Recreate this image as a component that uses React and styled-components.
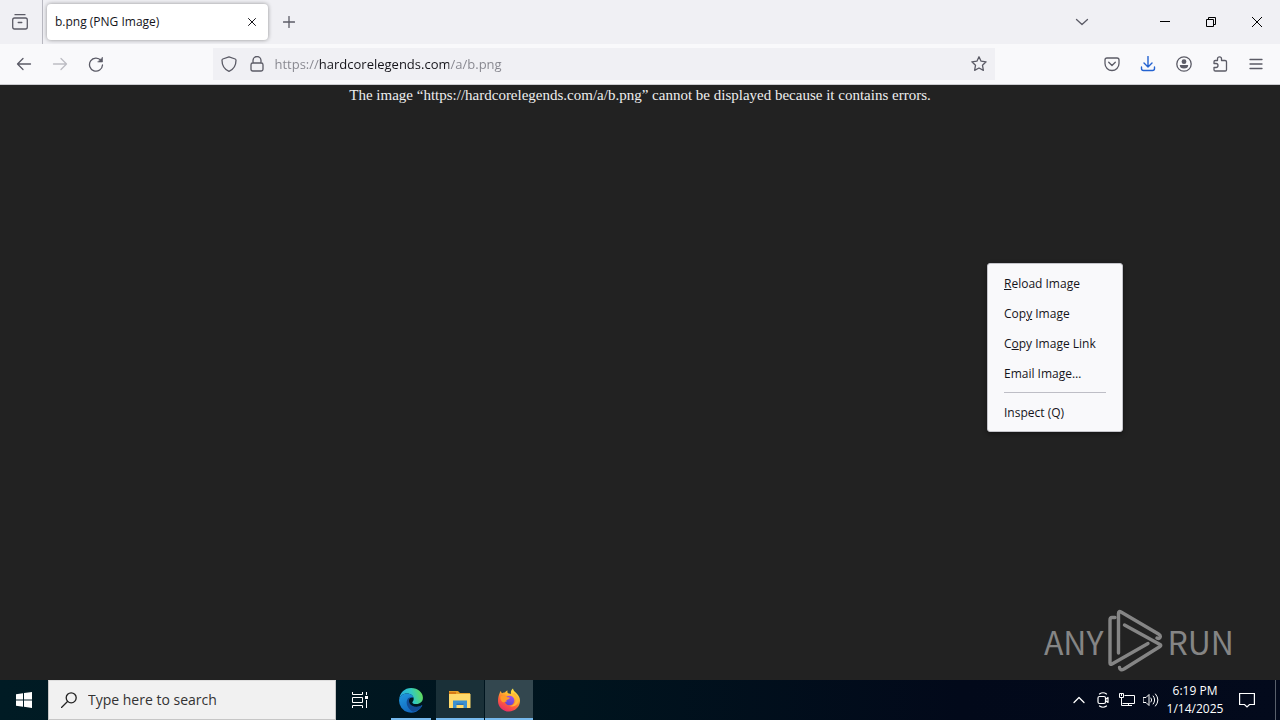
import React from "react";
import styled, { createGlobalStyle, css } from "styled-components";

const GlobalStyle = createGlobalStyle`
  * { box-sizing: border-box; }
  body { margin: 0; font-family: "Open Sans", "Noto Sans", sans-serif; background: #222; }
  button, input { font: inherit; color: inherit; border: 0; padding: 0; margin: 0; background: none; outline: none; border-radius: 0; }
  button { display: flex; align-items: center; justify-content: center; flex: none; }
`;

const Screen = styled.div`
  display: flex;
  flex-direction: column;
  min-height: 100vh;
`;

const Icon = styled.svg.attrs({ "aria-hidden": true })`
  display: block;
  flex: none;
  width: ${(p) => p.$w || 16}px;
  height: ${(p) => p.$h || p.$w || 16}px;
  fill: ${(p) => p.$fill || "none"};
  stroke: ${(p) => (p.$fill ? "none" : "currentColor")};
  stroke-width: ${(p) => p.$stroke || 1.3};
  stroke-linecap: ${(p) => (p.$square ? "butt" : "round")};
  stroke-linejoin: ${(p) => (p.$square ? "miter" : "round")};
`;

/* Browser chrome */
const TabStrip = styled.header`
  display: flex;
  align-items: stretch;
  height: 44px;
  background: #f0f0f4;
  color: #5b5b66;
`;
const ViewButton = styled.button`
  width: 43px;
  padding-right: 2px;
  border-right: 1px solid #b8b8c0;
`;
const Tab = styled.div`
  display: flex;
  align-items: center;
  width: 221px;
  height: 36px;
  margin: 4px 0 0 4px;
  padding: 0 4px 0 8px;
  border-radius: 4px;
  background: #fff;
  box-shadow: 0 0 4px rgba(0, 0, 0, 0.4);
  color: #15141a;
  font-size: 12px;
  line-height: 16px;
`;
const TabTitle = styled.span`
  flex: 1;
`;
const CloseTab = styled.button`
  width: 24px;
  height: 24px;
`;
const NewTab = styled.button`
  width: 42px;
`;
const Fill = styled.div`
  flex: 1;
`;
const ListTabs = styled.button`
  width: 36px;
  margin-right: 42px;
`;
const WindowButton = styled.button`
  width: 46px;
  color: #000;
`;
const NavBar = styled.nav`
  display: flex;
  align-items: center;
  height: 41px;
  padding: 0 6px;
  background: #f9f9fb;
  border-bottom: 1px solid #ccccd0;
  color: #5b5b66;
`;
const NavButton = styled.button`
  width: 36px;
  height: 32px;
  color: ${(p) => p.$color || "inherit"};
`;
const Spring = styled.div`
  flex: 100 1 0;
`;
const UrlBar = styled.div`
  display: flex;
  align-items: center;
  flex: 781 1 0;
  min-width: 0;
  height: 32px;
  padding: 0 2px;
  background: #f0f0f4;
`;
const UrlButton = styled.button`
  width: 28px;
  height: 28px;
`;
const UrlInput = styled.input`
  flex: 1;
  min-width: 0;
  height: 28px;
  margin-left: 3px;
  font-size: 13px;
  line-height: 20px;
  background: linear-gradient(90deg, #85858d 45px, #15141a 45px, #15141a 175px, #85858d 175px);
  background-clip: text;
  -webkit-background-clip: text;
  -webkit-text-fill-color: transparent;
`;

/* Page */
const Viewport = styled.main`
  position: relative;
  flex: 1;
  background: #222;
  color: #eee;
`;
const Message = styled.p`
  margin: 0;
  font: 15px/20px "Liberation Serif", serif;
  text-align: center;
`;
const ContextMenu = styled.div`
  position: absolute;
  left: 987px;
  top: 178px;
  width: 136px;
  padding: 5px 0 3px;
  border: 1px solid #c4c4ca;
  border-radius: 3px;
  background: #f9f9fb;
  color: #15141a;
  box-shadow: 0 2px 5px rgba(0, 0, 0, 0.4);
`;
const MenuItem = styled.button`
  && {
    display: block;
    width: 100%;
    height: 30px;
    padding: 0 16px;
    font-size: 12px;
    line-height: 30px;
    text-align: left;
    white-space: nowrap;
  }
`;
const MenuLine = styled.hr`
  margin: 3px 16px 5px;
  border: 0;
  border-top: 1px solid #bebec6;
`;
const Watermark = styled.div`
  position: absolute;
  right: 46px;
  bottom: 7px;
  display: flex;
  align-items: center;
  gap: 4px;
  color: #858585;
  font: 32px/64px "Noto Sans CJK JP", sans-serif;
`;

/* Taskbar */
const Taskbar = styled.footer`
  display: flex;
  height: 40px;
  background: linear-gradient(90deg, #001b24, #00141e 45%, #02091a 75%, #030a1c);
  color: #fff;
`;
const StartButton = styled.button`
  width: 48px;
`;
const SearchBox = styled.label`
  display: flex;
  align-items: center;
  gap: 11px;
  width: 288px;
  padding-left: 12px;
  border: 1px solid #c6c6c6;
  border-top-color: #dedede;
  background: #f1f1f1;
  color: #222;
`;
const SearchInput = styled.input`
  flex: 1;
  min-width: 0;
  font-size: 14px;
  line-height: 20px;
  &::placeholder { color: #333; opacity: 1; }
`;
const TaskButton = styled.button`
  width: 48px;
  margin-right: ${(p) => p.$gap || 0}px;
  background: ${(p) => p.$bg || "none"};
  ${(p) =>
    p.$open &&
    css`
      border-bottom: 2px solid #76b9ed;
      padding-top: 2px;
    `}
  ${(p) =>
    p.$inset &&
    css`
      width: 40px;
      margin: 0 5px 0 7px;
    `}
`;
const TrayButton = styled.button`
  width: 24px;
`;
const Clock = styled.time`
  display: flex;
  flex-direction: column;
  justify-content: center;
  width: 64px;
  font-size: 12px;
  line-height: 18px;
  text-align: center;
  white-space: nowrap;
`;
const Notifications = styled.button`
  width: 40px;
`;
const ShowDesktop = styled.button`
  width: 5px;
  margin-left: 8px;
  border-left: 1px solid #59606c;
`;

const EdgeLogo = () => (
  <svg width="26" height="26" viewBox="0 0 24 24" aria-hidden="true">
    <defs>
      <linearGradient id="edgeTop" x1="0" y1="0.6" x2="1" y2="0.4">
        <stop offset="0" stopColor="#24a9e4" />
        <stop offset=".55" stopColor="#31c8c4" />
        <stop offset="1" stopColor="#63dc55" />
      </linearGradient>
      <linearGradient id="edgeBody" x1="0" y1="0" x2=".6" y2="1">
        <stop offset="0" stopColor="#2099df" />
        <stop offset="1" stopColor="#1265bd" />
      </linearGradient>
    </defs>
    <path fill="url(#edgeTop)" d="M1 12C1.500 5.500 6 1 12.200 1 18.500 1 23 5.300 23 10c0 3.600-2.700 5.800-6 5.800-2.200 0-3.800-.7-3.800-1.500 0-.6 1.300-1.200 1.300-3.200C14.500 8 11.700 6 8.300 6 4.500 6 1.500 8.500 1 12Z" />
    <path fill="url(#edgeBody)" d="M1 12C1.300 8.500 4.500 6 8.300 6c3.300 0 5.700 1.800 6.100 4-3-1-5 .7-4.800 3.300.3 3.400 3.500 5.700 7.800 5.200 2-.2 3.300-1 4.300-1.500.5-.2.8.2.5.6A11.200 11.200 0 0 1 1 12Z" />
    <path fill="#124b94" d="M10.500 9.800C8 11 7.500 14 8.500 17c1 2.700 3.200 4.800 5.500 5.800 3.500-.2 6.400-2.400 8.200-5.200.3-.6 0-.9-.5-.6-4.500 2.200-9.300 1.100-11-2-1.100-2.200-.5-4.200.8-5Z" />
  </svg>
);

const FolderLogo = () => (
  <svg width="24" height="20" viewBox="0 0 24 20" aria-hidden="true">
    <path fill="#e8a229" d="M1 1h9l2 2h10v5H1z" />
    <path fill="#d67a16" d="M1 2h7v2H1z" />
    <path fill="#ffda6b" d="M1 4h21.500v14H1z" />
    <path fill="#3b91d1" d="M5 10.500h14V18h-3.500v-3h-7v3H5z" />
    <path fill="#2873b8" d="M8.500 13.500h7V15h-7z" />
  </svg>
);

const FirefoxLogo = () => (
  <svg width="24" height="24" viewBox="0 0 24 24" aria-hidden="true">
    <defs>
      <linearGradient id="foxFire" x1=".8" y1="0" x2=".3" y2="1">
        <stop offset="0" stopColor="#fff04d" />
        <stop offset=".35" stopColor="#ffb62d" />
        <stop offset=".65" stopColor="#ff603a" />
        <stop offset="1" stopColor="#e92b69" />
      </linearGradient>
      <linearGradient id="foxGlobe" x1=".7" y1="0" x2=".3" y2="1">
        <stop offset="0" stopColor="#a350e8" />
        <stop offset="1" stopColor="#5548d1" />
      </linearGradient>
    </defs>
    <path fill="url(#foxFire)" d="M2.500 5.500c.2-1.200.7-2 1.400-2.600.1 1 .5 1.700 1.100 2.300 1-.7 2-.8 3-.6.6-1 1.400-1.600 2.600-2-.4 1.200-.2 2.100.5 2.700L14 6c-.5-2.400.4-4.600 2-5.500.2 2.200 2 3.300 3.700 5 2.200 2.200 3.300 4.500 3.300 7.200A11 11 0 0 1 12 23.500C6 23.500 1 19 1 12.900c0-2.900.7-5.500 1.500-7.400Z" />
    <circle cx="12.500" cy="12.500" r="4.800" fill="url(#foxGlobe)" />
    <path fill="#ff9c28" d="M3.500 8.500c2-1.500 4.500-1 6 .2 1 .8 2.500.5 3.500 1-.3 1.200-1.700 1.700-2.800 2-.8.4-1 1.100-.5 2-2-.3-3 1-4.300.2C4 13 3 11 3.500 8.500Z" />
    <path fill="#ffb536" d="M15 6c3 1 4.300 3.500 3.800 6.500C18 16.500 15 18 12 17.800c4.500 2 9-.6 9.500-5C21.800 9 19 7 17.500 5Z" />
  </svg>
);

const PlayMark = () => (
  <svg width="56" height="64" viewBox="0 0 56 64" fill="none" stroke="#858585" strokeWidth="3.4" strokeLinejoin="round" strokeLinecap="round" aria-hidden="true">
    <path d="M8 8.500H5Q3 8.500 3 11v43q0 2 2 1L41 34.500" />
    <path d="M11.500 44V4.500q0-3 2.500-1.500L51.500 25q2.500 1.500 1.500 3.500-1 1.500-3 .5" />
    <path d="M17.500 16 53 35.500q1.500 1 0 2L17 60q-4 2-4.500-1.500" />
  </svg>
);

const menuItems = [
  ["", "R", "eload Image"],
  ["Cop", "y", " Image"],
  ["C", "o", "py Image Link"],
  ["Email Image…", "", ""],
];

export default function App() {
  return (
    <Screen>
      <GlobalStyle />
      <TabStrip>
        <ViewButton aria-label="Firefox View">
          <Icon viewBox="0 0 16 16"><path d="M3 .7h10M2.500 4h11Q15.300 4 15.300 6v7q0 2-1.800 2h-11Q.7 15 .7 13V6q0-2 1.800-2ZM6.200 8.500h3.600" /></Icon>
        </ViewButton>
        <Tab>
          <TabTitle>b.png (PNG Image)</TabTitle>
          <CloseTab aria-label="Close tab">
            <Icon $w={8} $stroke={1} viewBox="0 0 8 8"><path d="m.5.5 7 7m0-7-7 7" /></Icon>
          </CloseTab>
        </Tab>
        <NewTab aria-label="New tab">
          <Icon $w={12} viewBox="0 0 12 12"><path d="M6 .5v11M.5 6h11" /></Icon>
        </NewTab>
        <Fill />
        <ListTabs aria-label="List all tabs">
          <Icon $w={14} viewBox="0 0 14 14"><path d="m1.500 4.500 5.500 5 5.500-5" /></Icon>
        </ListTabs>
        <WindowButton aria-label="Minimize">
          <Icon $w={10} $stroke={1} $square viewBox="0 0 10 10"><path d="M0 4.500h10" /></Icon>
        </WindowButton>
        <WindowButton aria-label="Restore">
          <Icon $w={10} $stroke={1} $square viewBox="0 0 10 10"><path d="M.5 2.500h7v7h-7zM2.500 2.500v-2h7v7h-2" /></Icon>
        </WindowButton>
        <WindowButton aria-label="Close">
          <Icon $w={10} $stroke={1} $square viewBox="0 0 10 10"><path d="m0 0 10 10M10 0 0 10" /></Icon>
        </WindowButton>
      </TabStrip>

      <NavBar>
        <NavButton aria-label="Back">
          <Icon viewBox="0 0 16 16"><path d="M14.500 8H1.500M7 2.500 1.500 8 7 13.500" /></Icon>
        </NavButton>
        <NavButton aria-label="Forward" $color="#bdbdc3">
          <Icon viewBox="0 0 16 16"><path d="M1.500 8h13M9 2.500 14.500 8 9 13.500" /></Icon>
        </NavButton>
        <NavButton aria-label="Reload">
          <Icon viewBox="0 0 16 16"><path d="M13 4.500A6.500 6.500 0 1 0 14.500 9" /><path d="M14.500 1.500v4.500H10z" fill="currentColor" strokeWidth=".6" /></Icon>
        </NavButton>
        <Spring />
        <UrlBar>
          <UrlButton aria-label="Tracking protection">
            <Icon viewBox="0 0 16 16"><path d="M8 .8 14.200 3q.8.3.8 1.200C15 9.500 12.700 13.300 8 15.300 3.300 13.300 1 9.500 1 4.200Q1 3.300 1.800 3Z" /></Icon>
          </UrlButton>
          <UrlButton aria-label="Site information">
            <Icon viewBox="0 0 16 16"><path d="M4 7V4.500a4 4 0 0 1 8 0V7M3.800 7h8.400Q14 7 14 8.800v4.400Q14 15 12.200 15H3.800Q2 15 2 13.200V8.800Q2 7 3.800 7Z" /></Icon>
          </UrlButton>
          <UrlInput aria-label="Address" defaultValue="https://hardcorelegends.com/a/b.png" />
          <UrlButton aria-label="Bookmark this page">
            <Icon viewBox="0 0 16 16"><path d="m8 .8 2.100 4.400 5 .6-3.600 3.500.9 5L8 12l-4.400 2.300.9-5L.9 5.800l5-.6Z" /></Icon>
          </UrlButton>
        </UrlBar>
        <Spring />
        <NavButton aria-label="Save to Pocket">
          <Icon viewBox="0 0 16 16"><path d="M3 2h10q2 0 2 2v3.500a7 7 0 0 1-14 0V4q0-2 2-2ZM4.700 6.200 8 9.500l3.300-3.300" /></Icon>
        </NavButton>
        <NavButton aria-label="Downloads" $color="#2463d1">
          <Icon $stroke={1.4} viewBox="0 0 16 16"><path d="M8 .5V11M4 7l4 4 4-4M1.500 11v1.500Q1.500 14.500 3.500 14.500h9q2 0 2-2V11" /></Icon>
        </NavButton>
        <NavButton aria-label="Account">
          <Icon viewBox="0 0 16 16"><circle cx="8" cy="8" r="7.200" /><circle cx="8" cy="5.700" r="2.400" fill="currentColor" stroke="none" /><path d="M3.800 9h8.400q0 3.500-4.200 3.500T3.800 9Z" fill="currentColor" stroke="none" /></Icon>
        </NavButton>
        <NavButton aria-label="Extensions">
          <Icon viewBox="0 0 16 16"><path d="M2 7.500V5.800Q2 4.500 3.300 4.500H5.500V2.800a2 2 0 0 1 4 0V4.500h3.500Q14.500 4.500 14.500 5.800v7.900q0 1.300-1.300 1.300H3.300Q2 15 2 13.700V11.500h2a2 2 0 0 0 0-4Z" /></Icon>
        </NavButton>
        <NavButton aria-label="Application menu">
          <Icon $w={14} viewBox="0 0 14 14"><path d="M1 2.500h12M1 7h12M1 11.500h12" /></Icon>
        </NavButton>
      </NavBar>

      <Viewport>
        <Message>The image “https://hardcorelegends.com/a/b.png” cannot be displayed because it contains errors.</Message>
        <ContextMenu role="menu">
          {menuItems.map(([before, key, after]) => (
            <MenuItem role="menuitem" key={before + after}>{before}{key && <u>{key}</u>}{after}</MenuItem>
          ))}
          <MenuLine />
          <MenuItem role="menuitem">Inspect (Q)</MenuItem>
        </ContextMenu>
        <Watermark>
          <span>ANY</span>
          <PlayMark />
          <span>RUN</span>
        </Watermark>
      </Viewport>

      <Taskbar>
        <StartButton aria-label="Start">
          <Icon $fill="#fff" viewBox="0 0 16 16"><path d="M0 2.300 7 1.200v6.300H0zM8 1l8-1v7.500H8zM0 8.500h7v6.300l-7-1zM8 8.500h8V16l-8-1.200z" /></Icon>
        </StartButton>
        <SearchBox>
          <Icon $w={16} viewBox="0 0 16 16"><circle cx="10.200" cy="5.800" r="5" /><path d="M6.500 9.500.5 15.500" /></Icon>
          <SearchInput type="text" aria-label="Search" placeholder="Type here to search" />
        </SearchBox>
        <TaskButton aria-label="Task view">
          <Icon $stroke={1} $square viewBox="0 0 16 16"><path d="M.5 0v2.500h10V0M.5 5.500h10v5H.5zM.5 16v-2.500h10V16M14.500 0v3M14.500 8v8" /><path d="M13 4h3v3h-3z" fill="currentColor" stroke="none" /></Icon>
        </TaskButton>
        <TaskButton aria-label="Microsoft Edge" $open $inset><EdgeLogo /></TaskButton>
        <TaskButton aria-label="File Explorer" $open $bg="#1a3038" $gap={1}><FolderLogo /></TaskButton>
        <TaskButton aria-label="Firefox" $open $bg="#33474f"><FirefoxLogo /></TaskButton>
        <Fill />
        <TrayButton aria-label="Show hidden icons">
          <Icon $w={12} viewBox="0 0 12 12"><path d="m1 8.500 5-5 5 5" /></Icon>
        </TrayButton>
        <TrayButton aria-label="Meet now">
          <Icon $stroke={1.2} viewBox="0 0 16 16"><path d="M4.500 2Q8-.5 11.500 2M4.500 14q3.500 2.500 7 0M4.500 4.500h4.500q1.500 0 1.500 1.500v4q0 1.500-1.500 1.500H4.500Q3 11.500 3 10V6Q3 4.500 4.500 4.500ZM10.500 7.500l2.500-2v5l-2.500-2" /></Icon>
        </TrayButton>
        <TrayButton aria-label="Network">
          <Icon $stroke={1} $square viewBox="0 0 16 16"><path d="M5.500 3.500h10v8h-12M2.500 6v7.500H13M9.500 11.500v2M.5 1.500h4v4h-4zM2.500 1v3" /></Icon>
        </TrayButton>
        <TrayButton aria-label="Volume">
          <Icon $stroke={1} viewBox="0 0 16 16"><path d="M.5 5.500H3l3-3v11l-3-3H.5zM8 6q1.500 2 0 4M10.200 4q3 4 0 8M12.500 2q5 6 0 12" /></Icon>
        </TrayButton>
        <Clock><span>6:19 PM</span><span>1/14/2025</span></Clock>
        <Notifications aria-label="Notifications">
          <Icon $stroke={1.2} $square viewBox="0 0 16 16"><path d="M.6 1.500h14.800v11H10.500L8 15l-2.500-2.500H.6z" /></Icon>
        </Notifications>
        <ShowDesktop aria-label="Show desktop" />
      </Taskbar>
    </Screen>
  );
}
